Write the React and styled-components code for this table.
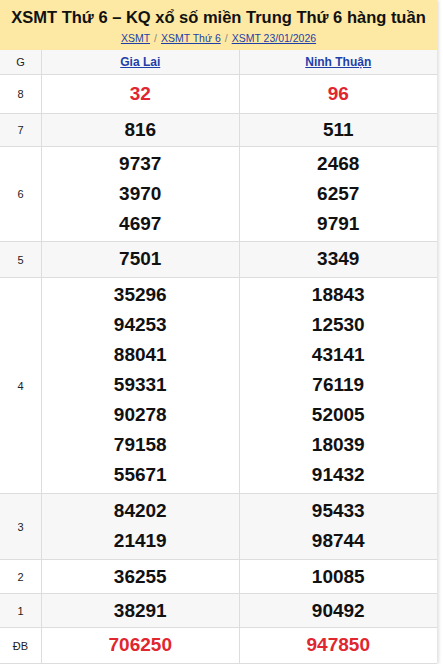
import React from "react";
import styled, { createGlobalStyle } from "styled-components";

const Global = createGlobalStyle`
  html, body { margin: 0; padding: 0; background: #fff; }
  body { font-family: "Liberation Sans", Arial, sans-serif; }
`;

const Wrap = styled.div`
  width: 437px;
  box-shadow: 2px 0 3px rgba(0,0,0,0.12);
  background: #fff;
`;

const Header = styled.div`
  background: #fde9a3;
  height: 50px;
  display: flex;
  flex-direction: column;
  align-items: center;
  box-sizing: border-box;
  padding-top: 7px;
`;

const Title = styled.h1`
  margin: 0;
  font-size: 16.5px;
  line-height: 20px;
  font-weight: bold;
  color: #111;
  white-space: nowrap;
`;

const Crumbs = styled.div`
  margin-top: 4px;
  font-size: 10.5px;
  line-height: 14px;
  color: #888;
  display: flex;
  gap: 4px;
`;

const Crumb = styled.a`
  color: #1f3fa8;
  text-decoration: underline;
`;

const Table = styled.div`
  display: grid;
  grid-template-columns: 42px 1fr 1fr;
`;

const Row = styled.div`
  display: contents;
  & > * {
    background: ${(p) => (p.$alt ? "#f7f7f7" : "#fff")};
  }
`;

const Label = styled.div`
  border-bottom: 1px solid #ddd;
  border-right: 1px solid #ddd;
  display: flex;
  align-items: center;
  justify-content: center;
  font-size: 11px;
  color: #222;
`;

const Cell = styled.div`
  border-bottom: 1px solid #ddd;
  border-right: ${(p) => (p.$last ? "none" : "1px solid #ddd")};
  display: flex;
  flex-direction: column;
  align-items: center;
  justify-content: center;
  padding: ${(p) => p.$pad || "2px 0 2px"};
`;

const HeadCell = styled(Cell)`
  padding: 0;
  height: 24px;
`;

const Province = styled.a`
  color: #1f3fa8;
  font-weight: bold;
  font-size: 12px;
  text-decoration: underline;
`;

const Num = styled.div`
  font-size: 19px;
  line-height: 30px;
  font-weight: bold;
  color: ${(p) => (p.$red ? "#e0262f" : "#111")};
`;

const rows = [
  { g: "8", a: ["32"], b: ["96"], red: true, pad: "4px 0 4px" },
  { g: "7", a: ["816"], b: ["511"], pad: "1px 0 1px" },
  { g: "6", a: ["9737", "3970", "4697"], b: ["2468", "6257", "9791"], pad: "2px 0 2px" },
  { g: "5", a: ["7501"], b: ["3349"], pad: "2px 0 3px" },
  {
    g: "4",
    a: ["35296", "94253", "88041", "59331", "90278", "79158", "55671"],
    b: ["18843", "12530", "43141", "76119", "52005", "18039", "91432"],
    pad: "2px 0 3px",
  },
  { g: "3", a: ["84202", "21419"], b: ["95433", "98744"], pad: "2px 0 3px" },
  { g: "2", a: ["36255"], b: ["10085"], pad: "2px 0 1px" },
  { g: "1", a: ["38291"], b: ["90492"], pad: "2px 0 1px" },
  { g: "ĐB", a: ["706250"], b: ["947850"], red: true, pad: "2px 0 3px" },
];

export default function App() {
  return (
    <Wrap>
      <Global />
      <Header>
        <Title>XSMT Thứ 6 – KQ xổ số miền Trung Thứ 6 hàng tuần</Title>
        <Crumbs>
          <Crumb>XSMT</Crumb>
          <span>/</span>
          <Crumb>XSMT Thứ 6</Crumb>
          <span>/</span>
          <Crumb>XSMT 23/01/2026</Crumb>
        </Crumbs>
      </Header>
      <Table>
        <Row $alt>
          <Label>G</Label>
          <HeadCell>
            <Province>Gia Lai</Province>
          </HeadCell>
          <HeadCell $last>
            <Province>Ninh Thuận</Province>
          </HeadCell>
        </Row>
        {rows.map((r, i) => (
          <Row key={r.g} $alt={i % 2 === 1}>
            <Label>{r.g}</Label>
            <Cell $pad={r.pad}>
              {r.a.map((n, j) => (
                <Num key={j} $red={r.red}>{n}</Num>
              ))}
            </Cell>
            <Cell $last $pad={r.pad}>
              {r.b.map((n, j) => (
                <Num key={j} $red={r.red}>{n}</Num>
              ))}
            </Cell>
          </Row>
        ))}
      </Table>
    </Wrap>
  );
}
